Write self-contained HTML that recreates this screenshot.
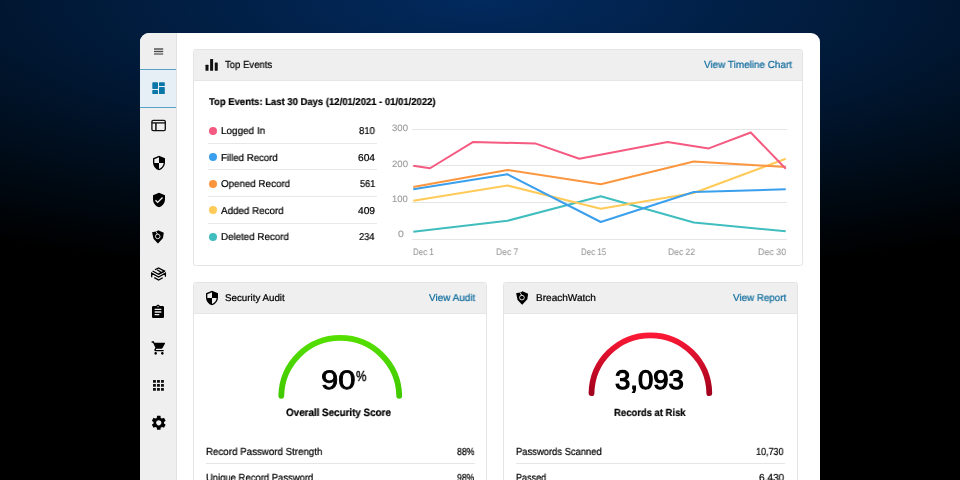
<!DOCTYPE html>
<html><head><meta charset="utf-8"><style>
html,body{margin:0;padding:0;}
body{width:960px;height:480px;overflow:hidden;position:relative;font-family:"Liberation Sans", sans-serif;
background:radial-gradient(ellipse 100% 58% at 50% 0%, #022a5e 0%, #011a39 42%, #000a14 78%, #000 100%);}
.t{position:absolute;line-height:1;white-space:nowrap;text-rendering:geometricPrecision;-webkit-text-stroke:0.22px currentColor;will-change:transform;}
.card{position:absolute;left:140px;top:33px;width:680px;height:460px;background:#fff;border-radius:9px 9px 0 0;overflow:hidden;}
.side{position:absolute;left:140px;top:33px;width:36px;height:460px;background:#efefef;border-right:1px solid #e2e2e2;border-radius:9px 0 0 0;}
.panel{position:absolute;box-sizing:border-box;border:1px solid #e4e4e4;border-radius:2.5px;background:#fff;overflow:hidden;}
.ph{height:31px;background:#efefef;border-bottom:1px solid #e6e6e6;box-sizing:border-box;}
</style></head><body>
<div class="card"></div>
<div class="side"></div>
<div style="position:absolute;left:140px;top:69px;width:36px;height:39px;background:#e5eff5;border-top:1px solid #58a2c6;border-bottom:1px solid #58a2c6;box-sizing:border-box;"></div>
<svg style="position:absolute;left:153px;top:47px" width="12" height="10" viewBox="0 0 12 10"><rect x="1" y="1.3" width="9.2" height="1.4" fill="#4a4a4a"/><rect x="1" y="3.8" width="9.2" height="1.4" fill="#4a4a4a"/><rect x="1" y="6.3" width="9.2" height="1.4" fill="#666"/></svg>
<svg style="position:absolute;left:150px;top:80px" width="17" height="17" viewBox="0 0 17 17" fill="#0b76a8"><rect x="2.3" y="2.3" width="5.7" height="6.6" rx="0.7"/><rect x="2.3" y="9.9" width="5.7" height="4.2" rx="0.7"/><rect x="9.0" y="2.3" width="5.8" height="3.8" rx="0.7"/><rect x="9.0" y="7.1" width="5.8" height="7.0" rx="0.7"/></svg>
<svg style="position:absolute;left:150px;top:118px" width="18" height="15" viewBox="0 0 18 15" fill="none" stroke="#111" stroke-width="1.35"><rect x="1.9" y="2.4" width="13.4" height="10.2" rx="1.3"/><line x1="1.9" y1="4.9" x2="15.3" y2="4.9"/><line x1="5.9" y1="4.9" x2="5.9" y2="12.6" stroke-width="1.5"/></svg>
<svg style="position:absolute;left:150.75px;top:154.50px" width="16" height="16" viewBox="0 0 24 24" fill="#000000"><path d="M12 1L3 5v6c0 5.55 3.84 10.74 9 12 5.16-1.26 9-6.45 9-12V5l-9-4zm0 10.99h7c-.53 4.12-3.28 7.79-7 8.94V12H5V6.3l7-3.11v8.8z"/></svg>
<svg style="position:absolute;left:150.75px;top:191.50px" width="16" height="16" viewBox="0 0 24 24" fill="#000000"><path d="M12 1L3 5v6c0 5.55 3.84 10.74 9 12 5.16-1.26 9-6.45 9-12V5l-9-4zm-2 16l-4-4 1.41-1.41L10 14.17l6.59-6.59L18 9l-8 8z"/></svg>
<svg style="position:absolute;left:150.30px;top:228.70px" width="15.6" height="15.6" viewBox="0 0 24 24" fill="#000000"><path d="M3.2 5.0 L10.6 3.4 L12.6 2.0 L21.2 5.6 L20.0 14.0 L12.4 22.2 L11.4 21.4 L5.4 15.0 Z"/><circle cx="11.9" cy="11.4" r="3.5" fill="none" stroke="#fff" stroke-width="1.3"/><path d="M9.1 4.0 L11.6 7.8" stroke="#fff" stroke-width="1.2"/><circle cx="11.9" cy="11.4" r="1.9"/></svg>
<svg style="position:absolute;left:149px;top:265px" width="19" height="18" viewBox="0 0 19 18"><g fill="none" stroke="#000" stroke-width="1.3" stroke-linejoin="miter" stroke-linecap="butt"><path d="M6.0 4.8 L9.5 2.9 L15.4 6.1 L12.5 7.7"/><path d="M8.0 4.7 L12.4 7.4 L9.6 9.0"/><path d="M3.6 6.0 L9.6 9.3 L15.6 6.2"/><path d="M2.7 12.2 L2.7 8.1 L9.6 12.0 L16.4 8.1 L16.4 11.8"/><path d="M5.3 12.6 L9.6 15.1 L13.7 12.7"/></g></svg>
<svg style="position:absolute;left:150.30px;top:303.50px" width="16" height="16" viewBox="0 0 24 24" fill="#000000"><path d="M19 3h-4.18C14.4 1.84 13.3 1 12 1c-1.3 0-2.4.84-2.82 2H5c-1.1 0-2 .9-2 2v14c0 1.1.9 2 2 2h14c1.1 0 2-.9 2-2V5c0-1.1-.9-2-2-2zm-7 0c.55 0 1 .45 1 1s-.45 1-1 1-1-.45-1-1 .45-1 1-1zm2 14H7v-2h7v2zm3-4H7v-2h10v2zm0-4H7V7h10v2z"/></svg>
<svg style="position:absolute;left:150.50px;top:340.20px" width="16" height="16" viewBox="0 0 24 24" fill="#000000"><path d="M7 18c-1.1 0-1.99.9-1.99 2S5.9 22 7 22s2-.9 2-2-.9-2-2-2zM1 2v2h2l3.6 7.59-1.35 2.45c-.16.28-.25.61-.25.96 0 1.1.9 2 2 2h12v-2H7.42c-.14 0-.25-.11-.25-.25l.03-.12.9-1.63h7.45c.75 0 1.41-.41 1.75-1.03l3.58-6.49A1.003 1.003 0 0020 4H5.21l-.94-2H1zm16 16c-1.1 0-1.99.9-1.99 2s.89 2 1.99 2 2-.9 2-2-.9-2-2-2z"/></svg>
<svg style="position:absolute;left:150px;top:377px" width="17" height="17" viewBox="0 0 17 17" fill="#111"><rect x="3" y="3" width="2.9" height="2.8" rx="0.3"/><rect x="3" y="7" width="2.9" height="2.8" rx="0.3"/><rect x="3" y="11" width="2.9" height="2.8" rx="0.3"/><rect x="7" y="3" width="2.9" height="2.8" rx="0.3"/><rect x="7" y="7" width="2.9" height="2.8" rx="0.3"/><rect x="7" y="11" width="2.9" height="2.8" rx="0.3"/><rect x="11" y="3" width="2.9" height="2.8" rx="0.3"/><rect x="11" y="7" width="2.9" height="2.8" rx="0.3"/><rect x="11" y="11" width="2.9" height="2.8" rx="0.3"/></svg>
<svg style="position:absolute;left:149.65px;top:413.85px" width="17.5" height="17.5" viewBox="0 0 24 24" fill="#000000"><path d="M19.14 12.94c.04-.3.06-.61.06-.94 0-.32-.02-.64-.07-.94l2.03-1.58c.18-.14.23-.41.12-.61l-1.92-3.32c-.12-.22-.37-.29-.59-.22l-2.39.96c-.5-.38-1.03-.7-1.62-.94l-.36-2.54c-.04-.24-.24-.41-.48-.41h-3.84c-.24 0-.43.17-.47.41l-.36 2.54c-.59.24-1.13.57-1.62.94l-2.39-.96c-.22-.08-.47 0-.59.22L2.74 8.87c-.12.21-.08.47.12.61l2.03 1.58c-.05.3-.09.63-.09.94s.02.64.07.94l-2.03 1.58c-.18.14-.23.41-.12.61l1.92 3.32c.12.22.37.29.59.22l2.39-.96c.5.38 1.03.7 1.62.94l.36 2.54c.05.24.24.41.48.41h3.84c.24 0 .44-.17.47-.41l.36-2.54c.59-.24 1.13-.56 1.62-.94l2.39.96c.22.08.47 0 .59-.22l1.92-3.32c.12-.22.07-.47-.12-.61l-2.01-1.58zM12 15.6c-1.98 0-3.6-1.62-3.6-3.6s1.62-3.6 3.6-3.6 3.6 1.62 3.6 3.6-1.62 3.6-3.6 3.6z"/></svg>
<div class="panel" style="left:193px;top:49px;width:610px;height:217px"><div class="ph"></div></div>
<svg style="position:absolute;left:205px;top:58px" width="13" height="13" viewBox="0 0 13 13" fill="#111"><rect x="0.5" y="6.75" width="3" height="6" rx="0.6"/><rect x="5.1" y="0.9" width="3" height="11.85" rx="0.6"/><rect x="9.75" y="4.5" width="3" height="8.25" rx="0.6"/></svg>
<div class="t" style="top:61.00px;font-size:10.2px;font-weight:400;color:#000000;left:225.10px;transform:scaleX(0.9363);transform-origin:0 0;">Top Events</div>
<div class="t" style="top:61.00px;font-size:10.2px;font-weight:400;color:#106c9e;left:703.60px;transform:scaleX(0.9729);transform-origin:0 0;">View Timeline Chart</div>
<div class="t" style="top:98.00px;font-size:10.0px;font-weight:700;color:#000000;left:209.40px;transform:scaleX(0.9484);transform-origin:0 0;">Top Events: Last 30 Days (12/01/2021 - 01/01/2022)</div>
<div style="position:absolute;left:208.8px;top:126.9px;width:8px;height:8px;background:#f55a80;border-radius:50%;"></div>
<div class="t" style="top:127.00px;font-size:10.0px;font-weight:400;color:#000000;left:220.70px;transform:scaleX(0.9903);transform-origin:0 0;">Logged In</div>
<div class="t" style="top:127.00px;font-size:10.0px;font-weight:400;color:#000000;left:359.00px;transform:scaleX(0.9578);transform-origin:0 0;">810</div>
<div style="position:absolute;left:208px;top:143px;width:168.7px;height:1px;background:#e8e8e8;"></div>
<div style="position:absolute;left:208.8px;top:153.42px;width:8px;height:8px;background:#3a9fec;border-radius:50%;"></div>
<div class="t" style="top:154.00px;font-size:10.0px;font-weight:400;color:#000000;left:220.70px;transform:scaleX(0.9632);transform-origin:0 0;">Filled Record</div>
<div class="t" style="top:154.00px;font-size:10.0px;font-weight:400;color:#000000;left:357.90px;transform:scaleX(1.0220);transform-origin:0 0;">604</div>
<div style="position:absolute;left:208px;top:169px;width:168.7px;height:1px;background:#e8e8e8;"></div>
<div style="position:absolute;left:208.8px;top:179.94px;width:8px;height:8px;background:#fb963e;border-radius:50%;"></div>
<div class="t" style="top:180.00px;font-size:10.0px;font-weight:400;color:#000000;left:220.70px;transform:scaleX(0.9780);transform-origin:0 0;">Opened Record</div>
<div class="t" style="top:180.00px;font-size:10.0px;font-weight:400;color:#000000;left:359.60px;transform:scaleX(0.9227);transform-origin:0 0;">561</div>
<div style="position:absolute;left:208px;top:196px;width:168.7px;height:1px;background:#e8e8e8;"></div>
<div style="position:absolute;left:208.8px;top:206.46px;width:8px;height:8px;background:#ffca58;border-radius:50%;"></div>
<div class="t" style="top:207.00px;font-size:10.0px;font-weight:400;color:#000000;left:220.70px;transform:scaleX(0.9800);transform-origin:0 0;">Added Record</div>
<div class="t" style="top:207.00px;font-size:10.0px;font-weight:400;color:#000000;left:357.90px;transform:scaleX(1.0220);transform-origin:0 0;">409</div>
<div style="position:absolute;left:208px;top:223px;width:168.7px;height:1px;background:#e8e8e8;"></div>
<div style="position:absolute;left:208.8px;top:232.98px;width:8px;height:8px;background:#40bdbe;border-radius:50%;"></div>
<div class="t" style="top:233.00px;font-size:10.0px;font-weight:400;color:#000000;left:220.70px;transform:scaleX(0.9765);transform-origin:0 0;">Deleted Record</div>
<div class="t" style="top:233.00px;font-size:10.0px;font-weight:400;color:#000000;left:359.40px;transform:scaleX(0.9344);transform-origin:0 0;">234</div>
<div style="position:absolute;left:412px;top:129px;width:375px;height:1px;background:#e6e6e6;"></div>
<div style="position:absolute;left:412px;top:165px;width:375px;height:1px;background:#e6e6e6;"></div>
<div style="position:absolute;left:412px;top:202px;width:375px;height:1px;background:#e6e6e6;"></div>
<div style="position:absolute;left:412px;top:239px;width:375px;height:1px;background:#e6e6e6;"></div>
<div class="t" style="top:123.00px;font-size:9.4px;font-weight:400;color:#999999;left:392.10px;transform:scaleX(1.0241);transform-origin:0 0;-webkit-text-stroke:0.08px currentColor;">300</div>
<div class="t" style="top:159.00px;font-size:9.4px;font-weight:400;color:#999999;left:392.10px;transform:scaleX(1.0241);transform-origin:0 0;-webkit-text-stroke:0.08px currentColor;">200</div>
<div class="t" style="top:194.00px;font-size:9.4px;font-weight:400;color:#999999;left:392.30px;transform:scaleX(1.0112);transform-origin:0 0;-webkit-text-stroke:0.08px currentColor;">100</div>
<div class="t" style="top:229.00px;font-size:9.4px;font-weight:400;color:#999999;left:397.80px;transform:scaleX(1.1200);transform-origin:0 0;-webkit-text-stroke:0.08px currentColor;">0</div>
<div class="t" style="top:248.00px;font-size:9.3px;font-weight:400;color:#999999;left:412.60px;transform:scaleX(0.8584);transform-origin:0 0;-webkit-text-stroke:0.08px currentColor;">Dec 1</div>
<div class="t" style="top:248.00px;font-size:9.3px;font-weight:400;color:#999999;left:495.90px;transform:scaleX(0.9206);transform-origin:0 0;-webkit-text-stroke:0.08px currentColor;">Dec 7</div>
<div class="t" style="top:248.00px;font-size:9.3px;font-weight:400;color:#999999;left:580.70px;transform:scaleX(0.8536);transform-origin:0 0;-webkit-text-stroke:0.08px currentColor;">Dec 15</div>
<div class="t" style="top:248.00px;font-size:9.3px;font-weight:400;color:#999999;left:668.30px;transform:scaleX(0.9185);transform-origin:0 0;-webkit-text-stroke:0.08px currentColor;">Dec 22</div>
<div class="t" style="top:248.00px;font-size:9.3px;font-weight:400;color:#999999;left:757.80px;transform:scaleX(0.9561);transform-origin:0 0;-webkit-text-stroke:0.08px currentColor;">Dec 30</div>
<svg style="position:absolute;left:0;top:0" width="960" height="480" fill="none" stroke-width="2" stroke-linejoin="round"><polyline points="413.25,231.75 507.5,220.75 600.75,196.25 693.75,222.5 785.75,231.25" stroke="#40bdbe"/><polyline points="413.25,200.75 507.5,185.5 600.75,208.75 693.75,193.0 785.75,158.75" stroke="#ffca58"/><polyline points="413.25,189.25 507.5,174.25 600.75,222.0 693.75,192.0 785.75,189.25" stroke="#3a9fec"/><polyline points="413.25,187.0 507.5,170.0 600.75,184.25 693.75,161.5 785.75,167.0" stroke="#fb963e"/><polyline points="413.25,165.75 430,168.25 472.8,142.1 535.1,143.4 579.3,158.7 667.5,142 708.75,148.4 750.75,132.5 785.75,168.75" stroke="#f55a80"/></svg>
<div class="panel" style="left:193px;top:282px;width:294px;height:240px"><div class="ph" style="height:31px"></div></div>
<div class="panel" style="left:503px;top:282px;width:295px;height:240px"><div class="ph" style="height:31px"></div></div>
<svg style="position:absolute;left:203.50px;top:289.80px" width="16" height="16" viewBox="0 0 24 24" fill="#000000"><path d="M12 1L3 5v6c0 5.55 3.84 10.74 9 12 5.16-1.26 9-6.45 9-12V5l-9-4zm0 10.99h7c-.53 4.12-3.28 7.79-7 8.94V12H5V6.3l7-3.11v8.8z"/></svg>
<div class="t" style="top:294.00px;font-size:9.7px;font-weight:400;color:#000000;left:225.20px;transform:scaleX(1.0087);transform-origin:0 0;">Security Audit</div>
<div class="t" style="top:294.00px;font-size:10.0px;font-weight:400;color:#106c9e;left:429.00px;transform:scaleX(0.9918);transform-origin:0 0;">View Audit</div>
<svg style="position:absolute;left:513.90px;top:289.90px" width="16" height="16" viewBox="0 0 24 24" fill="#000000"><path d="M3.2 5.0 L10.6 3.4 L12.6 2.0 L21.2 5.6 L20.0 14.0 L12.4 22.2 L11.4 21.4 L5.4 15.0 Z"/><circle cx="11.9" cy="11.4" r="3.5" fill="none" stroke="#fff" stroke-width="1.3"/><path d="M9.1 4.0 L11.6 7.8" stroke="#fff" stroke-width="1.2"/><circle cx="11.9" cy="11.4" r="1.9"/></svg>
<div class="t" style="top:294.00px;font-size:10.0px;font-weight:400;color:#000000;left:535.60px;transform:scaleX(1.0052);transform-origin:0 0;">BreachWatch</div>
<div class="t" style="top:294.00px;font-size:10.0px;font-weight:400;color:#106c9e;left:732.50px;transform:scaleX(0.9815);transform-origin:0 0;">View Report</div>
<svg style="position:absolute;left:0;top:0" width="960" height="480" fill="none"><defs><linearGradient id="gg" gradientUnits="userSpaceOnUse" x1="0" y1="335" x2="0" y2="399"><stop offset="0" stop-color="#55e000"/><stop offset="1" stop-color="#40c800"/></linearGradient><linearGradient id="rg" gradientUnits="userSpaceOnUse" x1="0" y1="332" x2="0" y2="396"><stop offset="0" stop-color="#ff1a36"/><stop offset="1" stop-color="#9e001c"/></linearGradient></defs><path d="M281.29 395.8 A58.97 58.97 0 0 1 399.21 395.8" stroke="url(#gg)" stroke-width="5.8" stroke-linecap="round"/><path d="M591.51 393.1 A58.9 58.9 0 0 1 709.29 393.1" stroke="url(#rg)" stroke-width="5.8" stroke-linecap="round"/></svg>
<div class="t" style="top:367.00px;font-size:26.7px;font-weight:400;color:#000000;left:320.84px;transform:scaleX(1.1637);transform-origin:0 0;-webkit-text-stroke:0.8px #000;">90</div>
<div class="t" style="top:370.00px;font-size:14.5px;font-weight:400;color:#000000;left:355.80px;transform:scaleX(0.8038);transform-origin:0 0;-webkit-text-stroke:0.45px #000;">%</div>
<div class="t" style="top:408.00px;font-size:10.6px;font-weight:700;color:#000000;left:286.25px;transform:scaleX(0.9278);transform-origin:0 0;">Overall Security Score</div>
<div class="t" style="top:367.00px;font-size:26.7px;font-weight:400;color:#000000;left:615.47px;transform:scaleX(1.0317);transform-origin:0 0;-webkit-text-stroke:1.2px #000;">3,093</div>
<div class="t" style="top:409.00px;font-size:10.3px;font-weight:700;color:#000000;left:614.40px;transform:scaleX(0.9199);transform-origin:0 0;">Records at Risk</div>
<div class="t" style="top:448.00px;font-size:10.2px;font-weight:400;color:#000000;left:206.10px;transform:scaleX(0.9564);transform-origin:0 0;">Record Password Strength</div>
<div class="t" style="top:448.00px;font-size:10.2px;font-weight:400;color:#000000;left:456.70px;transform:scaleX(0.8607);transform-origin:0 0;">88%</div>
<div style="position:absolute;left:205.5px;top:463px;width:269.2px;height:1px;background:#e6e6e6;"></div>
<div class="t" style="top:474.00px;font-size:10.2px;font-weight:400;color:#000000;left:206.10px;transform:scaleX(0.9288);transform-origin:0 0;">Unique Record Password</div>
<div class="t" style="top:474.00px;font-size:10.2px;font-weight:400;color:#000000;left:456.90px;transform:scaleX(0.8509);transform-origin:0 0;">98%</div>
<div style="position:absolute;left:205.5px;top:489px;width:269.2px;height:1px;background:#e6e6e6;"></div>
<div class="t" style="top:448.00px;font-size:10.2px;font-weight:400;color:#000000;left:516.40px;transform:scaleX(0.9227);transform-origin:0 0;">Passwords Scanned</div>
<div class="t" style="top:448.00px;font-size:10.2px;font-weight:400;color:#000000;left:756.40px;transform:scaleX(0.8827);transform-origin:0 0;">10,730</div>
<div style="position:absolute;left:515.8px;top:463px;width:268.9px;height:1px;background:#e6e6e6;"></div>
<div class="t" style="top:474.00px;font-size:10.2px;font-weight:400;color:#000000;left:516.40px;transform:scaleX(0.8888);transform-origin:0 0;">Passed</div>
<div class="t" style="top:474.00px;font-size:10.2px;font-weight:400;color:#000000;left:758.75px;transform:scaleX(0.9854);transform-origin:0 0;">6,430</div>
<div style="position:absolute;left:515.8px;top:489px;width:268.9px;height:1px;background:#e6e6e6;"></div>
</body></html>
